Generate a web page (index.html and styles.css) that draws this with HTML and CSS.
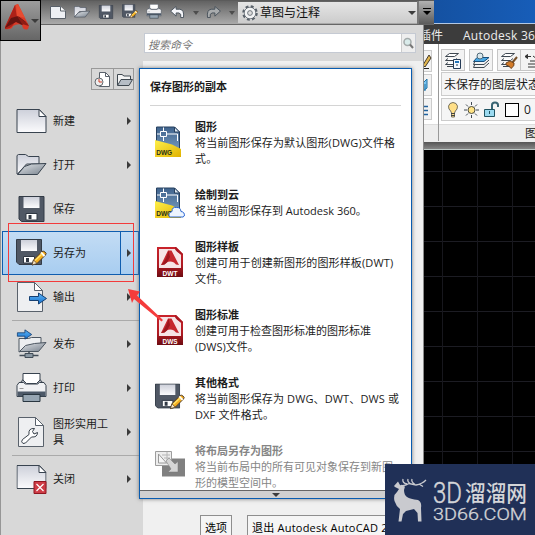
FILE: index.html
```html
<!DOCTYPE html>
<html lang="zh-CN">
<head>
<meta charset="utf-8">
<title>Autodesk AutoCAD</title>
<link rel="stylesheet" href="styles.css">
</head>
<body>
<svg class="defs" width="0" height="0" aria-hidden="true">
  <defs>
    <linearGradient id="paper" x1="0" y1="0" x2="0" y2="1"><stop offset="0" stop-color="#cdd0da"/><stop offset="1" stop-color="#fbfbfd"/></linearGradient>
    <linearGradient id="steel" x1="0" y1="0" x2="1" y2="1"><stop offset="0" stop-color="#e4e7ea"/><stop offset="1" stop-color="#77818d"/></linearGradient>
    <linearGradient id="arrow" x1="0" y1="0" x2="0" y2="1"><stop offset="0" stop-color="#5fb5f5"/><stop offset="1" stop-color="#1672cf"/></linearGradient>
    <linearGradient id="sheet" x1="0" y1="0" x2="0" y2="1"><stop offset="0" stop-color="#3f638d"/><stop offset="1" stop-color="#7fa3c4"/></linearGradient>
    <linearGradient id="gold" x1="0" y1="0" x2="1" y2="1"><stop offset="0" stop-color="#fff04a"/><stop offset="1" stop-color="#e0b200"/></linearGradient>
    <linearGradient id="redfill" x1="0" y1="0" x2="0" y2="1"><stop offset="0" stop-color="#c9232b"/><stop offset=".6" stop-color="#b01a22"/><stop offset="1" stop-color="#6e0c12"/></linearGradient>
  </defs>
  <symbol id="new" viewBox="0 0 30 26">
    <path d="M.5 1.500H23l6.500 7V24.500H.5Z" fill="url(#paper)" stroke="#38434f"/><path d="M22.500 1.500V8.500H29.500Z" fill="#fff" stroke="#38434f"/>
  </symbol>
  <symbol id="open" viewBox="0 0 30 22">
    <path d="M.5 20V1.500L2 .5H9L12 2.500H22.500V10H10L1 20Z" fill="url(#paper)" stroke="#38434f"/><path d="M1 20.500 8 12.500 15 10 29.500 9.500 21 20.500Z" fill="url(#steel)" stroke="#38434f"/>
  </symbol>
  <symbol id="floppy" viewBox="0 0 26 26">
    <path d="M.5.500H25.500V25.500H3L.5 23Z" fill="#505865" stroke="#333b46"/><path d="M5 1H21V12H5Z" fill="url(#paper)"/><path d="M7.500 17.500H18.500V24H7.500Z" fill="#fff" stroke="#303844"/><path d="M10 19h3v4h-3Z" fill="#303844"/>
  </symbol>
  <symbol id="pencil" viewBox="0 0 16 16">
    <path d="M1 15 2.500 10 11 1.500Q12 .5 14 2T14.500 5L6 13.500Z" fill="#f5ae20" stroke="#4c3824"/><path d="M10 2.500 13.500 6" stroke="#fff" stroke-width="2"/><path d="M4 10.500 11 4" stroke="#ffe26b" stroke-width="1.500"/><path d="M1 15 2.500 10 6 13.500Z" fill="#fbe7c4" stroke="#4c3824" stroke-width=".7"/>
  </symbol>
  <symbol id="saveas" viewBox="0 0 31 28"><use href="#floppy" width="26" height="26"/><use href="#pencil" x="15" y="11" width="16" height="16"/></symbol>
  <symbol id="page" viewBox="0 0 27 30">
    <path d="M.5.500H17.500L25.500 8.500V29.500H.5Z" fill="#eeeff1" stroke="#59616b"/><path d="M17.500.500V8.500H25.500Z" fill="#fff" stroke="#59616b"/>
  </symbol>
  <symbol id="bluearrow" viewBox="0 0 18 13"><path d="M.5 4.500H9.500V1L17.500 6.500 9.500 12V8.500H.5Z" fill="url(#arrow)" stroke="#153f72"/></symbol>
  <symbol id="export" viewBox="0 0 31 30"><use href="#page" x="1" width="27" height="30"/><use href="#bluearrow" x="13" y="10" width="18" height="13"/></symbol>
  <symbol id="publish" viewBox="0 0 30 30">
    <path d="M2.500 23V9.500H12L15 8.500H24.500V14Z" fill="#eceef0" stroke="#4c5661"/><path d="M3 22.500 9 16.500 18 14.500 29.500 13.500 22 22.500Z" fill="url(#steel)" stroke="#4c5661"/><path d="M3 26.500H22M12.500 22V25" stroke="#414c57" stroke-width="1.500"/><path d="M8.500 24.500h8v4h-8Z" fill="#8997a2" stroke="#414c57"/><use href="#bluearrow" x="0" y="0" width="16" height="11"/>
  </symbol>
  <symbol id="print" viewBox="0 0 30 30">
    <path d="M3.500 10 7 6H23L26.500 10V13H3.500Z" fill="#a9adb4" stroke="#38434f"/><path d="M.5 12.500 2.500 9.500H7L9 11H21L23 9.500H27.500L29.500 12.500V23.500H.5Z" fill="#f0f1f3" stroke="#38434f"/><path d="M1 18.500H29V23H1Z" fill="#4d5968"/><path d="M6.500.500H23.500V7L20 10.500H10L6.500 7Z" fill="#fff" stroke="#38434f"/><path d="M6.500 21.500H23.500V28.500H6.500Z" fill="#96a5b2" stroke="#293640"/><path d="M3 15.500h4" stroke="#999"/>
  </symbol>
  <symbol id="tools" viewBox="0 0 27 31"><use href="#page" width="27" height="30"/><path d="M5 26.500Q2.500 25 4.500 22.500L11 17.500Q10 11 16.500 11.500L14.500 14.500 16 17 19.500 15.500Q19.500 20.500 13.500 20L7.500 26Z" fill="#fff" stroke="#37404a"/></symbol>
  <symbol id="close" viewBox="0 0 30 29"><use href="#new" y="-1" width="30" height="26"/><path d="M17.500 16.500h12v12h-12Z" fill="#ce3c46" stroke="#8f1620"/><path d="m20 19 7 7m0-7-7 7" stroke="#fff" stroke-width="1.200"/></symbol>
  <symbol id="dwg" viewBox="0 0 26 31">
    <path d="M1.500 1H19.500L24.500 6V29H1.500Z" fill="url(#sheet)" stroke="#27405f"/><path d="M19.500 1V6H24.500Z" fill="#dce8f2" stroke="#27405f"/><path d="M2 8H5.500M11.500 8H22.500M8.500 1.500V5M8.500 11V15M22.500 8V15M5.500 5.500H11.500V10.500H5.500Z" fill="none" stroke="#fff"/><path d="M0 14 17 18.500 26 23V31H0Z" fill="url(#gold)"/><text class="tag" x="1.200" y="28.500" textLength="16" lengthAdjust="spacingAndGlyphs">DWG</text>
  </symbol>
  <symbol id="cloud" viewBox="0 0 30 31"><use href="#dwg" width="26" height="31"/><path d="M14.500 30Q12.500 26 17 24.500 17 19.500 21.500 20.500 25.500 20 26 24.500 30 25 29.300 29L28 30Z" fill="#edf5ff" stroke="#2a66d2"/></symbol>
  <symbol id="redsheet" viewBox="0 0 26 30">
    <path d="M0 0H19L26 7V30H0Z" fill="url(#redfill)"/><path d="M2 2H18L24 8V21H2Z" fill="#f6e4e6"/><path d="M18 0V1Q18 5 26 8V7L19 0Z" fill="#ab1821"/><path d="M4 18 11 3.500H14.500L22 18Q18.500 18 17 15.500 13 13.500 9.500 15.500 8 18 4 18Z" fill="#c5272e"/><path d="M4 18Q9 14 11.500 3.500L13 10 10 15.500Q8 18 4 18Z" fill="#9e161e"/></symbol>
  <symbol id="dwt" viewBox="0 0 26 30"><use href="#redsheet" width="26" height="30"/><text class="tag light" x="5.500" y="28.500" textLength="15" lengthAdjust="spacingAndGlyphs">DWT</text></symbol>
  <symbol id="dws" viewBox="0 0 26 30"><use href="#redsheet" width="26" height="30"/><text class="tag light" x="5.500" y="28.500" textLength="15" lengthAdjust="spacingAndGlyphs">DWS</text></symbol>
  <symbol id="layout" viewBox="0 0 30 26">
    <path d="M7 7.500H30V25.500H7Z" fill="#808080"/><path d="M.5.500H16.500V14.500H.5Z" fill="#ededed" stroke="#9d9d9d"/><path d="M3.500 3V12H11.500Z" fill="#f5f5f5" stroke="#999"/><path d="M7 4H15M9 7H15M12 1V13" stroke="#b5b5b5"/><path d="m11 10 3-3 6 6 3-2.500V21H13l3-3Z" fill="#d5d5d5" stroke="#777" stroke-width=".5"/>
  </symbol>
  <symbol id="undo" viewBox="0 0 16 13"><path d="M.5 5.500 6.500.500V3.500H10.500Q15.500 4 14.500 12.500H11.500Q12.500 8 9.500 7.500H6.500V11Z" fill="currentColor" stroke="#46505a"/></symbol>
  <symbol id="gear" viewBox="0 0 16 16"><circle cx="8" cy="8" r="6.500" fill="#f2f3f4" stroke="#59616a" stroke-width="2.500" stroke-dasharray="2.800 2.300"/><circle cx="8" cy="8" r="5.800" fill="#f2f3f4" stroke="#59616a" stroke-width=".8"/><circle cx="8" cy="8" r="2.400" fill="#ddd" stroke="#59616a" stroke-width=".8"/></symbol>
  <symbol id="stack" viewBox="0 0 18 17"><path d="M5.500 1.500H14.500L10.500 4.500H1.500ZM4 6.500 1.500 8.500H10.500L13 6.500M4 10.500 1.500 12.500H10.500L13 10.500M3 14.500H10" fill="#fff" stroke="#3f4851"/></symbol>
</svg>

<div class="screen">
  <div class="app">
    <div class="desktop"></div>
    <div class="tabs"><span>插件</span><span class="tab-360">Autodesk 360</span></div>
    <div class="ribbon">
      <div class="stub">
        <div class="stub-tools">
          <div class="cell"><svg width="9" height="16"><path d="m0 12 6-10 2 3-6 9Z" fill="#e1b64d" stroke="#453b2d"/><path d="M0 15.500H6" stroke="#222"/></svg></div>
          <div class="cell"><svg width="9" height="16"><path d="M0 6 4 2V11L0 14M2 7V14" fill="#7cc5f1" stroke="#1e72a8"/></svg></div>
          <div class="cell"><svg width="9" height="16"><path d="M0 5.500H5M0 9.500H5M0 13.500H5" stroke="#20629d" stroke-width="1.500"/></svg></div>
        </div>
        <div class="ribbon-title"></div>
      </div>
      <div class="layers">
        <div class="layer-tools">
          <div class="cell"><svg width="18" height="17"><use href="#stack"/><path d="M9.500 7.500h7v9h-7Z" fill="#f5faff" stroke="#263c57"/><path d="M11 10h4" stroke="#2374b7" stroke-width="2"/><path d="M12 13h2" stroke="#263c57"/></svg></div>
          <div class="cell"><svg width="18" height="17"><path d="M5 5.500H17L12 9.500H1.500Z" fill="#4ba9e4" stroke="#17507f"/><path d="M3 9 1.500 12.500H12L17 8M3 12 1.500 15.500H12L17 11" fill="none" stroke="#3f4851"/><circle cx="8" cy="4" r="3" fill="#dae8ed" stroke="#526b78"/></svg></div>
          <div class="cell"><svg width="18" height="17"><use href="#stack"/><path d="m17 5-5 6" stroke="#765029" stroke-width="2"/><path d="M6 11 10 9 14 11Q15 14 11 16.500 9 13 6 13Z" fill="#d37b29" stroke="#6e431e"/></svg></div>
          <div class="cell last"><svg width="18" height="17"><path d="M1 4.500H7M1 4.500l2.500-2v4ZM6 9H14M4 12H13M4 15H13M9 4l4 3" fill="#111" stroke="#333"/></svg></div>
        </div>
        <div class="layer-state">未保存的图层状态</div>
        <div class="layer-current">
          <svg width="13" height="18"><path d="M4.500 12Q4 10 2 8 .5 5 3 2.500 6 .5 9 2.500 11.500 5 10 8 8 10 7.500 12V16H4.500Z" fill="#ffdf87" stroke="#76715e"/><path d="M4 12.500H8M4 14.500H8" stroke="#444"/></svg>
          <svg width="17" height="18"><circle cx="8.500" cy="9" r="3.500" fill="#ffe384" stroke="#4d4d43"/><path d="M8.500 1v3M8.500 14v3M1 9h3M13 9h3M3 3.500l2 2M12 12.500l2 2M3 14.500l2-2M12 5.500l2-2" stroke="#414b54"/></svg>
          <svg width="17" height="18"><path d="M9 9V4Q9 1.500 12 1.500T15 4V6" fill="none" stroke="#386472" stroke-width="2"/><path d="M1.500 8.500H11.500V15.500H1.500Z" fill="#9bdaf0" stroke="#205361"/><path d="M6.500 10v3" stroke="#205361"/></svg>
          <span class="swatch"></span><span>0</span>
        </div>
        <div class="ribbon-title">图层</div>
      </div>
    </div>
    <div class="ribbon-edge"></div>
    <div class="canvas"></div>
  </div>

  <div class="menu">
    <aside class="sidebar">
      <div class="recent">
        <span><svg width="17" height="17"><path d="M5.500 1.500H11.500L15.500 5.500V15.500H5.500Z" fill="#fff" stroke="#59616b"/><path d="M11.500 1.500v4h4" fill="none" stroke="#59616b"/><circle cx="5" cy="11" r="4" fill="#eee" stroke="#646a70"/><path d="M5 8v3h3" fill="none" stroke="#d2432c"/></svg></span>
        <span><svg width="17" height="17"><path d="M1.500 14V3.500H6L8 5H14.500V8" fill="#f4f4f4" stroke="#3f4850"/><path d="M1.500 14.500 5 8.500H16.500L13 14.500Z" fill="#b6bdc5" stroke="#3f4850"/></svg></span>
      </div>
      <nav>
        <div class="item"><svg width="30" height="26"><use href="#new"/></svg><span class="label">新建</span><i class="tri"></i></div>
        <div class="item"><svg width="30" height="22"><use href="#open"/></svg><span class="label">打开</span><i class="tri"></i></div>
        <div class="item"><svg width="30" height="26"><use href="#floppy"/></svg><span class="label">保存</span></div>
        <div class="item active"><svg width="31" height="28"><use href="#saveas"/></svg><span class="label">另存为</span><i class="tri"></i></div>
        <div class="item"><svg width="31" height="30"><use href="#export"/></svg><span class="label">输出</span><i class="tri"></i></div>
        <hr>
        <div class="item"><svg width="30" height="30"><use href="#publish"/></svg><span class="label">发布</span><i class="tri"></i></div>
        <div class="item"><svg width="30" height="30"><use href="#print"/></svg><span class="label">打印</span><i class="tri"></i></div>
        <div class="item"><svg width="30" height="31"><use href="#tools"/></svg><span class="label">图形实用工具</span><i class="tri"></i></div>
        <hr>
        <div class="item"><svg width="30" height="29"><use href="#close"/></svg><span class="label">关闭</span><i class="tri"></i></div>
      </nav>
    </aside>
    <div class="main">
      <div class="search"><span class="hint">搜索命令</span><span class="find"><svg width="13" height="15"><circle cx="5.500" cy="6" r="3.500" fill="#d9ebea" stroke="#a4abab" stroke-width="1.500"/><path d="m8 8.500 3 3.500" stroke="#777" stroke-width="2"/></svg></span></div>
      <div class="footer"><span class="button">选项</span><span class="button exit">退出 Autodesk AutoCAD 2</span></div>
    </div>
  </div>

  <section class="submenu">
    <div class="sub-body">
      <h2>保存图形的副本</h2>
      <div class="entry wide"><svg width="30" height="32"><use href="#dwg" width="26" height="31"/></svg><div><b>图形</b><p>将当前图形保存为默认图形(DWG)文件格<br>式。</p></div></div>
      <div class="entry"><svg width="30" height="31"><use href="#cloud"/></svg><div><b>绘制到云</b><p>将当前图形保存到 Autodesk 360。</p></div></div>
      <div class="entry wide"><svg width="30" height="30"><use href="#dwt"/></svg><div><b>图形样板</b><p>创建可用于创建新图形的图形样板(DWT)<br>文件。</p></div></div>
      <div class="entry"><svg width="30" height="30"><use href="#dws"/></svg><div><b>图形标准</b><p>创建可用于检查图形标准的图形标准<br>(DWS)文件。</p></div></div>
      <div class="entry wide"><svg width="30" height="28"><use href="#saveas"/></svg><div><b>其他格式</b><p>将当前图形保存为 DWG、DWT、DWS 或<br>DXF 文件格式。</p></div></div>
      <div class="entry disabled"><svg width="30" height="26"><use href="#layout"/></svg><div><b>将布局另存为图形</b><p>将当前布局中的所有可见对象保存到新图<br>形的模型空间中。</p></div></div>
    </div>
    <div class="scroll"><i class="down"></i></div>
  </section>

  <header class="quickbar">
    <div class="tools">
      <svg width="16" height="14" viewBox="0 0 16 14"><path d="M.5 1.500H10.500L15.500 6V13.500H.5Z" fill="#eef0f4" stroke="#596069"/><path d="M10.500 1.500V6H15.500" fill="#fff" stroke="#596069"/></svg>
      <svg width="16" height="12"><use href="#open"/></svg>
      <svg width="16" height="14"><use href="#floppy"/></svg>
      <svg width="16" height="15"><use href="#saveas"/></svg>
      <svg width="16" height="15"><use href="#print"/></svg>
      <svg class="undo" width="15" height="12"><use href="#undo"/></svg><i class="down"></i>
      <svg class="redo" width="15" height="12"><use href="#undo"/></svg><i class="down"></i>
    </div>
    <div class="workspace"><svg width="16" height="16"><use href="#gear"/></svg><span>草图与注释</span><i class="down"></i></div>
    <div class="overflow"><i class="bar"></i><i class="down"></i></div>
  </header>
  <div class="logo">
    <svg width="24" height="27" viewBox="0 0 24 27"><path d="M0 23 10 1 13 0 24 22 23 25Q18 27 17 21 13 19 8 22 7 26 0 25Z" fill="#d93a27"/><path d="M0 23 10 1 12 14 8 21Q5 25 0 25Z" fill="#ad2118"/><path d="M6 14 13 12 21 18 17 21 11 18 0 24Z" fill="#651411"/><path d="M12 12 22 19 24 22 17 20Z" fill="#8f1c14"/><path d="M11 1 13 0 20 14 12 12Z" fill="#e64c31"/></svg>
    <i class="down"></i>
  </div>

  <div class="highlight"></div>
  <svg class="pointer" width="44" height="46"><path d="M3 4 15 6.500 12 10.500 38 35 36.500 36.500 9 14 7 18Z" fill="#f43c3c"/></svg>

  <div class="watermark">
    <svg width="35" height="45" viewBox="0 0 35 45"><path d="M1 8 5 3.500 7 7 12 8.500 11 12Q11 17 14 19 17 21 25 22 29 24 28 30L28.500 43.500H25L24.500 35 21 31 13 33 10 36 8.500 43.500H5.500L7 31Q3 28 1.500 23 0 17 4 14L6 11 2 9Z" fill="#c9cacf"/><path d="M8 7.500Q12 8 16 5.500L23 7Q29 6 33 2M14 6Q9 5 10 1M18 6Q14 4 15 1M22 6.500Q18 4 19 1M26 6L30 8.500" fill="none" stroke="#c9cacf" stroke-width="1.300"/></svg>
    <svg class="brand" width="98" height="46"><text class="brand-main" x="0" y="25" textLength="29" lengthAdjust="spacingAndGlyphs">3D</text><text class="brand-cjk" x="32" y="23" textLength="62" lengthAdjust="spacingAndGlyphs">溜溜网</text><text class="brand-sub" x="0" y="42" textLength="94" lengthAdjust="spacingAndGlyphs">3D66.COM</text></svg>
  </div>
</div>
</body>
</html>
```
FILE: styles.css
```css
* { box-sizing: border-box; }
body { margin: 0; font: 11px/16px "Open Sans", "Noto Sans CJK SC", sans-serif; color: #1c1c1c; }
svg { display: block; flex: none; }
.defs { position: absolute; }
.screen { position: relative; width: 535px; height: 535px; overflow: hidden; background: #000; }
.tag { font: bold 7px "Liberation Sans", sans-serif; fill: #28301a; }
.light { fill: #fff; }
.down { width: 0; height: 0; border: 4px solid transparent; border-top-color: #3c3c3c; border-bottom: 0; }

/* Application window */
.app { display: flex; flex-direction: column; height: 535px; margin-left: 423px; }
.desktop { height: 24px; background: linear-gradient(90deg, #14509f, #175db8); border-bottom: 1px solid #b2c8e4; }
.tabs { display: flex; height: 20px; background: #3c3c3c; color: #ececec; font-size: 12px; line-height: 23px; white-space: nowrap; }
.tabs span:first-child { flex: none; margin-left: -4px; width: 44px; }
.tabs .tab-360 { flex: none; letter-spacing: .25px; }
.ribbon { display: flex; height: 98px; background: #fff; border-bottom: 1px solid #ededed; }
.stub { flex: none; display: flex; flex-direction: column; width: 16px; border-right: 1px solid #999; }
.stub-tools { flex: 1; display: flex; flex-direction: column; gap: 2px; padding-top: 6px; width: 9px; }
.stub .cell { height: 22px; width: 9px; border: 1px solid #ccc; border-left: 0; background: #f2f2f2; padding-top: 2px; }
.ribbon-title { height: 17px; background: #ededed; border-top: 1px solid #ddd; font-size: 12px; padding-left: 86px; line-height: 17px; white-space: nowrap; }
.stub .ribbon-title { padding: 0; }
.layers { flex: none; width: 140px; display: flex; flex-direction: column; }
.layer-tools { display: flex; gap: 4px; padding: 5px 0 0 2px; height: 29px; }
.layer-tools .cell { display: flex; justify-content: center; align-items: center; width: 24px; height: 22px; border: 1px solid #c6c6c6; background: #f3f3f3; }
.layer-tools .last { margin-left: -4px; border-left: 0; }
.layer-state { height: 24px; margin-left: 2px; border: 1px solid #ccc; background: #f5f5f5; padding: 4px 2px 2px; font-size: 12px; white-space: nowrap; }
.layer-current { display: flex; align-items: center; gap: 3px; height: 23px; margin: 2px 0 3px 2px; padding-left: 5px; border: 1px solid #ccc; background: #f5f5f5; font-size: 12px; }
.swatch { width: 14px; height: 14px; margin: 0 2px; border: 1px solid #000; background: #fff; }
.ribbon-edge { height: 8px; background: linear-gradient(#555, #858585); border-bottom: 1px solid #bcc7c4; }
.canvas { flex: 1; background: repeating-linear-gradient(90deg, transparent 0 19px, #17171d 19px 20px, transparent 20px 35px) 0 0, repeating-linear-gradient(transparent 0 21px, #1c1c23 21px 22px, transparent 22px 35px), #000; }

/* Application menu */
.menu { position: absolute; left: 0; top: 24px; width: 424px; height: 511px; display: flex; background: #d8d8d8; border-left: 1px solid #969696; border-right: 1px solid #8c8c8c; }
.sidebar { width: 142px; padding-top: 44px; }
.recent { display: flex; width: 43px; height: 22px; margin-left: 90px; border: 1px solid #999; }
.recent span { flex: 1; padding: 2px; }
.recent span + span { border-left: 1px solid #999; }
nav { margin-top: 9px; }
.item { position: relative; display: flex; align-items: center; height: 44px; margin-left: 1px; padding-left: 14px; width: 137px; }
.item svg { width: 31px; }
.item .label { width: 58px; margin-left: 6px; }
.item .tri { margin-left: 16px; border: 4px solid transparent; border-left: 4px solid #3a3a3a; border-right: 0; }
.active { background: linear-gradient(#c3dcf4, #a8cdf0); border: 1px solid #0f5daf; padding-left: 13px; }
.active::after { content: ""; position: absolute; left: 117px; top: 0; bottom: 0; border-left: 1px solid #0f5daf; }
hr { height: 1px; margin: 1px 3px 1px 11px; border: 0; background: #aaa; }
.main { flex: 1; display: flex; flex-direction: column; }
.search { display: flex; height: 20px; width: 272px; margin: 9px 0 8px 1px; border: 1px solid #c5cad3; background: #fff; }
.hint { flex: 1; padding-left: 3px; color: #777; font-style: italic; line-height: 21px; }
.find { width: 14px; border-left: 1px solid #ccc; background: #eee; padding-top: 2px; }
.footer { flex: 1; display: flex; gap: 15px; align-items: flex-start; overflow: hidden; padding: 454px 0 0 57px; background: #f0f0f0; white-space: nowrap; }
.button { height: 26px; line-height: 24px; padding: 0 4px; border: 1px solid #8e8e8e; background: #f5f5f5; color: #000; }
.exit { width: 160px; letter-spacing: .22px; }

/* Save As panel */
.submenu { position: absolute; left: 139px; top: 68px; width: 273px; height: 431px; border: 1px solid #095cb0; background: #fff; box-shadow: 0 0 4px #777; display: flex; flex-direction: column; }
.sub-body { height: 421px; overflow: hidden; padding: 0 10px; }
h2 { height: 37px; margin: 0 0 13px; padding-top: 10px; border-bottom: 1px solid #d4d4d4; font: bold 11px/16px "Open Sans", "Noto Sans CJK SC", sans-serif; }
.entry { display: flex; gap: 10px; padding-left: 5px; margin-bottom: 20px; white-space: nowrap; }
.entry svg { margin-top: 8px; }
.entry:nth-of-type(1) svg { margin-top: 7px; }
.entry:nth-of-type(2) svg { margin: 0 0 -6px; }
.entry b { display: block; height: 16px; }
.entry p { margin: 0; }
.wide p { letter-spacing: .13px; }
.disabled { color: #858585; }
.scroll { height: 8px; border-top: 1px solid #666; background: #d0d0d0; }
.scroll .down { display: block; margin: 2px auto 0; }

/* Title bar */
.quickbar { position: absolute; left: 0; top: 0; width: 434px; height: 25px; display: flex; border-top: 1px solid #5b5b5b; border-bottom: 1px solid #666; background: linear-gradient(#626262, #aaa); }
.tools { display: flex; align-items: center; width: 238px; padding-left: 50px; gap: 8px; }
.tools svg { margin-top: -2px; }
.tools .down { margin-right: -1px; border-width: 3px; border-bottom: 0; border-top: 4px solid #4d4d4d; }
.undo { color: #f5f6fa; }
.redo { color: #a8abad; transform: scaleX(-1); }
.workspace { flex: 1; display: flex; align-items: center; gap: 2px; margin-top: 1px; height: 21px; padding: 0 1px 0 4px; background: linear-gradient(#e5e5e5, #ccc); color: #111; font-size: 12px; }
.workspace .down { margin-left: auto; }
.overflow { width: 17px; padding: 7px 4px; background: linear-gradient(#b1b1b1, #5b5b5b); border-left: 2px solid #777; }
.overflow .down, .bar { display: block; }
.overflow .down { border-top-color: #000; margin-top: 2px; }
.bar { width: 8px; border-top: 1px solid #000; }
.logo { position: absolute; left: 0; top: 0; width: 41px; height: 41px; display: flex; align-items: flex-start; gap: 2px; padding: 3px 0 0 4px; border: 1px solid #000; background: linear-gradient(#9d9d9d, #666); }
.logo .down { margin-top: 15px; }

/* Annotations */
.highlight { position: absolute; left: 8px; top: 223px; width: 126px; height: 59px; border: 1px solid #f33b3b; }
.pointer { position: absolute; left: 125px; top: 285px; }
.watermark { position: absolute; left: 385px; top: 464px; width: 150px; height: 71px; display: flex; padding: 14px 0 0 8px; gap: 5px; background: #203057; }
.brand-main { font: 300 29px Roboto, sans-serif; fill: #d4d5d8; stroke: #d4d5d8; stroke-width: .5px; }
.brand-cjk { font: 500 22px "Noto Sans CJK SC", sans-serif; fill: #d4d5d8; }
.brand-sub { font: 300 16px Roboto, sans-serif; fill: #d4d5d8; stroke: #d4d5d8; stroke-width: .3px; }
```
